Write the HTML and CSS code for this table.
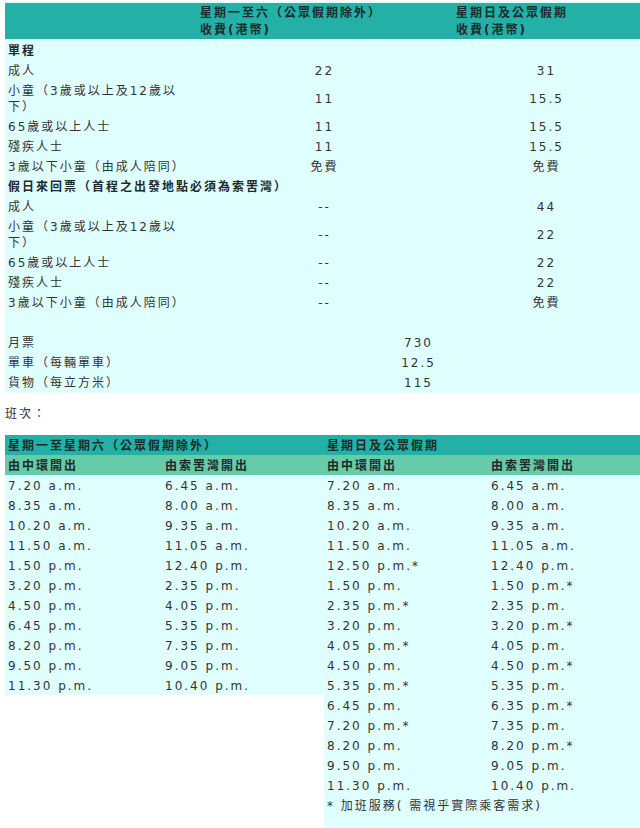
FILE: index.html
```html
<!DOCTYPE html>
<html lang="zh-Hant">
<head>
<meta charset="utf-8">
<title>收費及班次</title>
<link rel="stylesheet" href="styles.css">
</head>
<body>
<div class="page">
  <table class="fares">
    <colgroup><col class="fc1"><col class="fc2"><col class="fc3"></colgroup>
    <thead>
      <tr><th></th><th>星期一至六（公眾假期除外）<br>收費(港幣)</th><th>星期日及公眾假期<br>收費(港幣)</th></tr>
    </thead>
    <tbody>
      <tr><td class="sec" colspan="3">單程</td></tr>
      <tr><td>成人</td><td class="v">22</td><td class="v">31</td></tr>
      <tr><td>小童（3歲或以上及12歲以下）</td><td class="v">11</td><td class="v">15.5</td></tr>
      <tr><td>65歲或以上人士</td><td class="v">11</td><td class="v">15.5</td></tr>
      <tr><td>殘疾人士</td><td class="v">11</td><td class="v">15.5</td></tr>
      <tr><td>3歲以下小童（由成人陪同）</td><td class="v">免費</td><td class="v">免費</td></tr>
      <tr><td class="sec" colspan="3">假日來回票（首程之出發地點必須為索罟灣）</td></tr>
      <tr><td>成人</td><td class="v">--</td><td class="v">44</td></tr>
      <tr><td>小童（3歲或以上及12歲以下）</td><td class="v">--</td><td class="v">22</td></tr>
      <tr><td>65歲或以上人士</td><td class="v">--</td><td class="v">22</td></tr>
      <tr><td>殘疾人士</td><td class="v">--</td><td class="v">22</td></tr>
      <tr><td>3歲以下小童（由成人陪同）</td><td class="v">--</td><td class="v">免費</td></tr>
      <tr><td colspan="3"></td></tr>
      <tr><td>月票</td><td class="v" colspan="2">730</td></tr>
      <tr><td>單車（每輛單車）</td><td class="v" colspan="2">12.5</td></tr>
      <tr><td>貨物（每立方米）</td><td class="v" colspan="2">115</td></tr>
    </tbody>
  </table>

  <p class="label">班次：</p>

  <div class="schedules">
    <table class="sched sched-left">
      <colgroup><col class="lc1"><col class="lc2"></colgroup>
      <thead>
        <tr class="h1"><th colspan="2">星期一至星期六（公眾假期除外）</th></tr>
        <tr class="h2"><th>由中環開出</th><th>由索罟灣開出</th></tr>
      </thead>
      <tbody>
        <tr><td>7.20 a.m.</td><td>6.45 a.m.</td></tr>
        <tr><td>8.35 a.m.</td><td>8.00 a.m.</td></tr>
        <tr><td>10.20 a.m.</td><td>9.35 a.m.</td></tr>
        <tr><td>11.50 a.m.</td><td>11.05 a.m.</td></tr>
        <tr><td>1.50 p.m.</td><td>12.40 p.m.</td></tr>
        <tr><td>3.20 p.m.</td><td>2.35 p.m.</td></tr>
        <tr><td>4.50 p.m.</td><td>4.05 p.m.</td></tr>
        <tr><td>6.45 p.m.</td><td>5.35 p.m.</td></tr>
        <tr><td>8.20 p.m.</td><td>7.35 p.m.</td></tr>
        <tr><td>9.50 p.m.</td><td>9.05 p.m.</td></tr>
        <tr><td>11.30 p.m.</td><td>10.40 p.m.</td></tr>
      </tbody>
    </table>
    <table class="sched sched-right">
      <colgroup><col class="rc1"><col class="rc2"></colgroup>
      <thead>
        <tr class="h1"><th colspan="2">星期日及公眾假期</th></tr>
        <tr class="h2"><th>由中環開出</th><th>由索罟灣開出</th></tr>
      </thead>
      <tbody>
        <tr><td>7.20 a.m.</td><td>6.45 a.m.</td></tr>
        <tr><td>8.35 a.m.</td><td>8.00 a.m.</td></tr>
        <tr><td>10.20 a.m.</td><td>9.35 a.m.</td></tr>
        <tr><td>11.50 a.m.</td><td>11.05 a.m.</td></tr>
        <tr><td>12.50 p.m.*</td><td>12.40 p.m.</td></tr>
        <tr><td>1.50 p.m.</td><td>1.50 p.m.*</td></tr>
        <tr><td>2.35 p.m.*</td><td>2.35 p.m.</td></tr>
        <tr><td>3.20 p.m.</td><td>3.20 p.m.*</td></tr>
        <tr><td>4.05 p.m.*</td><td>4.05 p.m.</td></tr>
        <tr><td>4.50 p.m.</td><td>4.50 p.m.*</td></tr>
        <tr><td>5.35 p.m.*</td><td>5.35 p.m.</td></tr>
        <tr><td>6.45 p.m.</td><td>6.35 p.m.*</td></tr>
        <tr><td>7.20 p.m.*</td><td>7.35 p.m.</td></tr>
        <tr><td>8.20 p.m.</td><td>8.20 p.m.*</td></tr>
        <tr><td>9.50 p.m.</td><td>9.05 p.m.</td></tr>
        <tr><td>11.30 p.m.</td><td>10.40 p.m.</td></tr>
        <tr><td colspan="2">* 加班服務( 需視乎實際乘客需求)</td></tr>
        <tr><td colspan="2"></td></tr>
      </tbody>
    </table>
  </div>
</div>
</body>
</html>
```

FILE: styles.css
```css
html, body {
  margin: 0;
  padding: 0;
  background: #ffffff;
}

body {
  font-family: "DejaVu Sans", "Noto Sans CJK TC", sans-serif;
  font-size: 12px;
  color: #333333;
  letter-spacing: 2px;
}

.page {
  padding: 1px 0 0 5px;
}

/* Fare table */
.fares {
  width: 635px;
  table-layout: fixed;
  border-collapse: separate;
  border-spacing: 0 2px;
  background: #e0ffff;
}

.fc1 { width: 191px; }
.fc2 { width: 256px; }
.fc3 { width: 188px; }

.fares th,
.fares td {
  padding: 2px 3px 0 4px;
  height: 16px;
  line-height: 16px;
  vertical-align: middle;
  text-align: left;
}

.fares td:first-child {
  padding-left: 3px;
}

.fares thead th {
  background: #22b0a7;
  padding-top: 2px;
  height: 33px;
  line-height: 17px;
  font-weight: bold;
  color: #1f2a2a;
}

.fares .sec {
  font-weight: bold;
  color: #1f2a2a;
}

.fares .v {
  text-align: center;
}

.label {
  margin: 13px 0 12px 0;
  line-height: 17px;
}

/* Schedule tables */
.schedules {
  display: flex;
  align-items: flex-start;
}

.sched {
  table-layout: fixed;
  border-collapse: collapse;
  background: #e0ffff;
}

.sched-left { width: 319px; }
.sched-right { width: 316px; }

.lc1 { width: 157px; }
.lc2 { width: 162px; }
.rc1 { width: 164px; }
.rc2 { width: 152px; }

.sched th,
.sched td {
  height: 18px;
  padding: 2px 0 0 3px;
  line-height: 18px;
  text-align: left;
  white-space: nowrap;
  vertical-align: middle;
}

.sched th {
  font-weight: bold;
  color: #1f2a2a;
}

.sched .h1 th {
  background: #22b0a7;
}

.sched .h2 th {
  background: #66cba8;
}
```
